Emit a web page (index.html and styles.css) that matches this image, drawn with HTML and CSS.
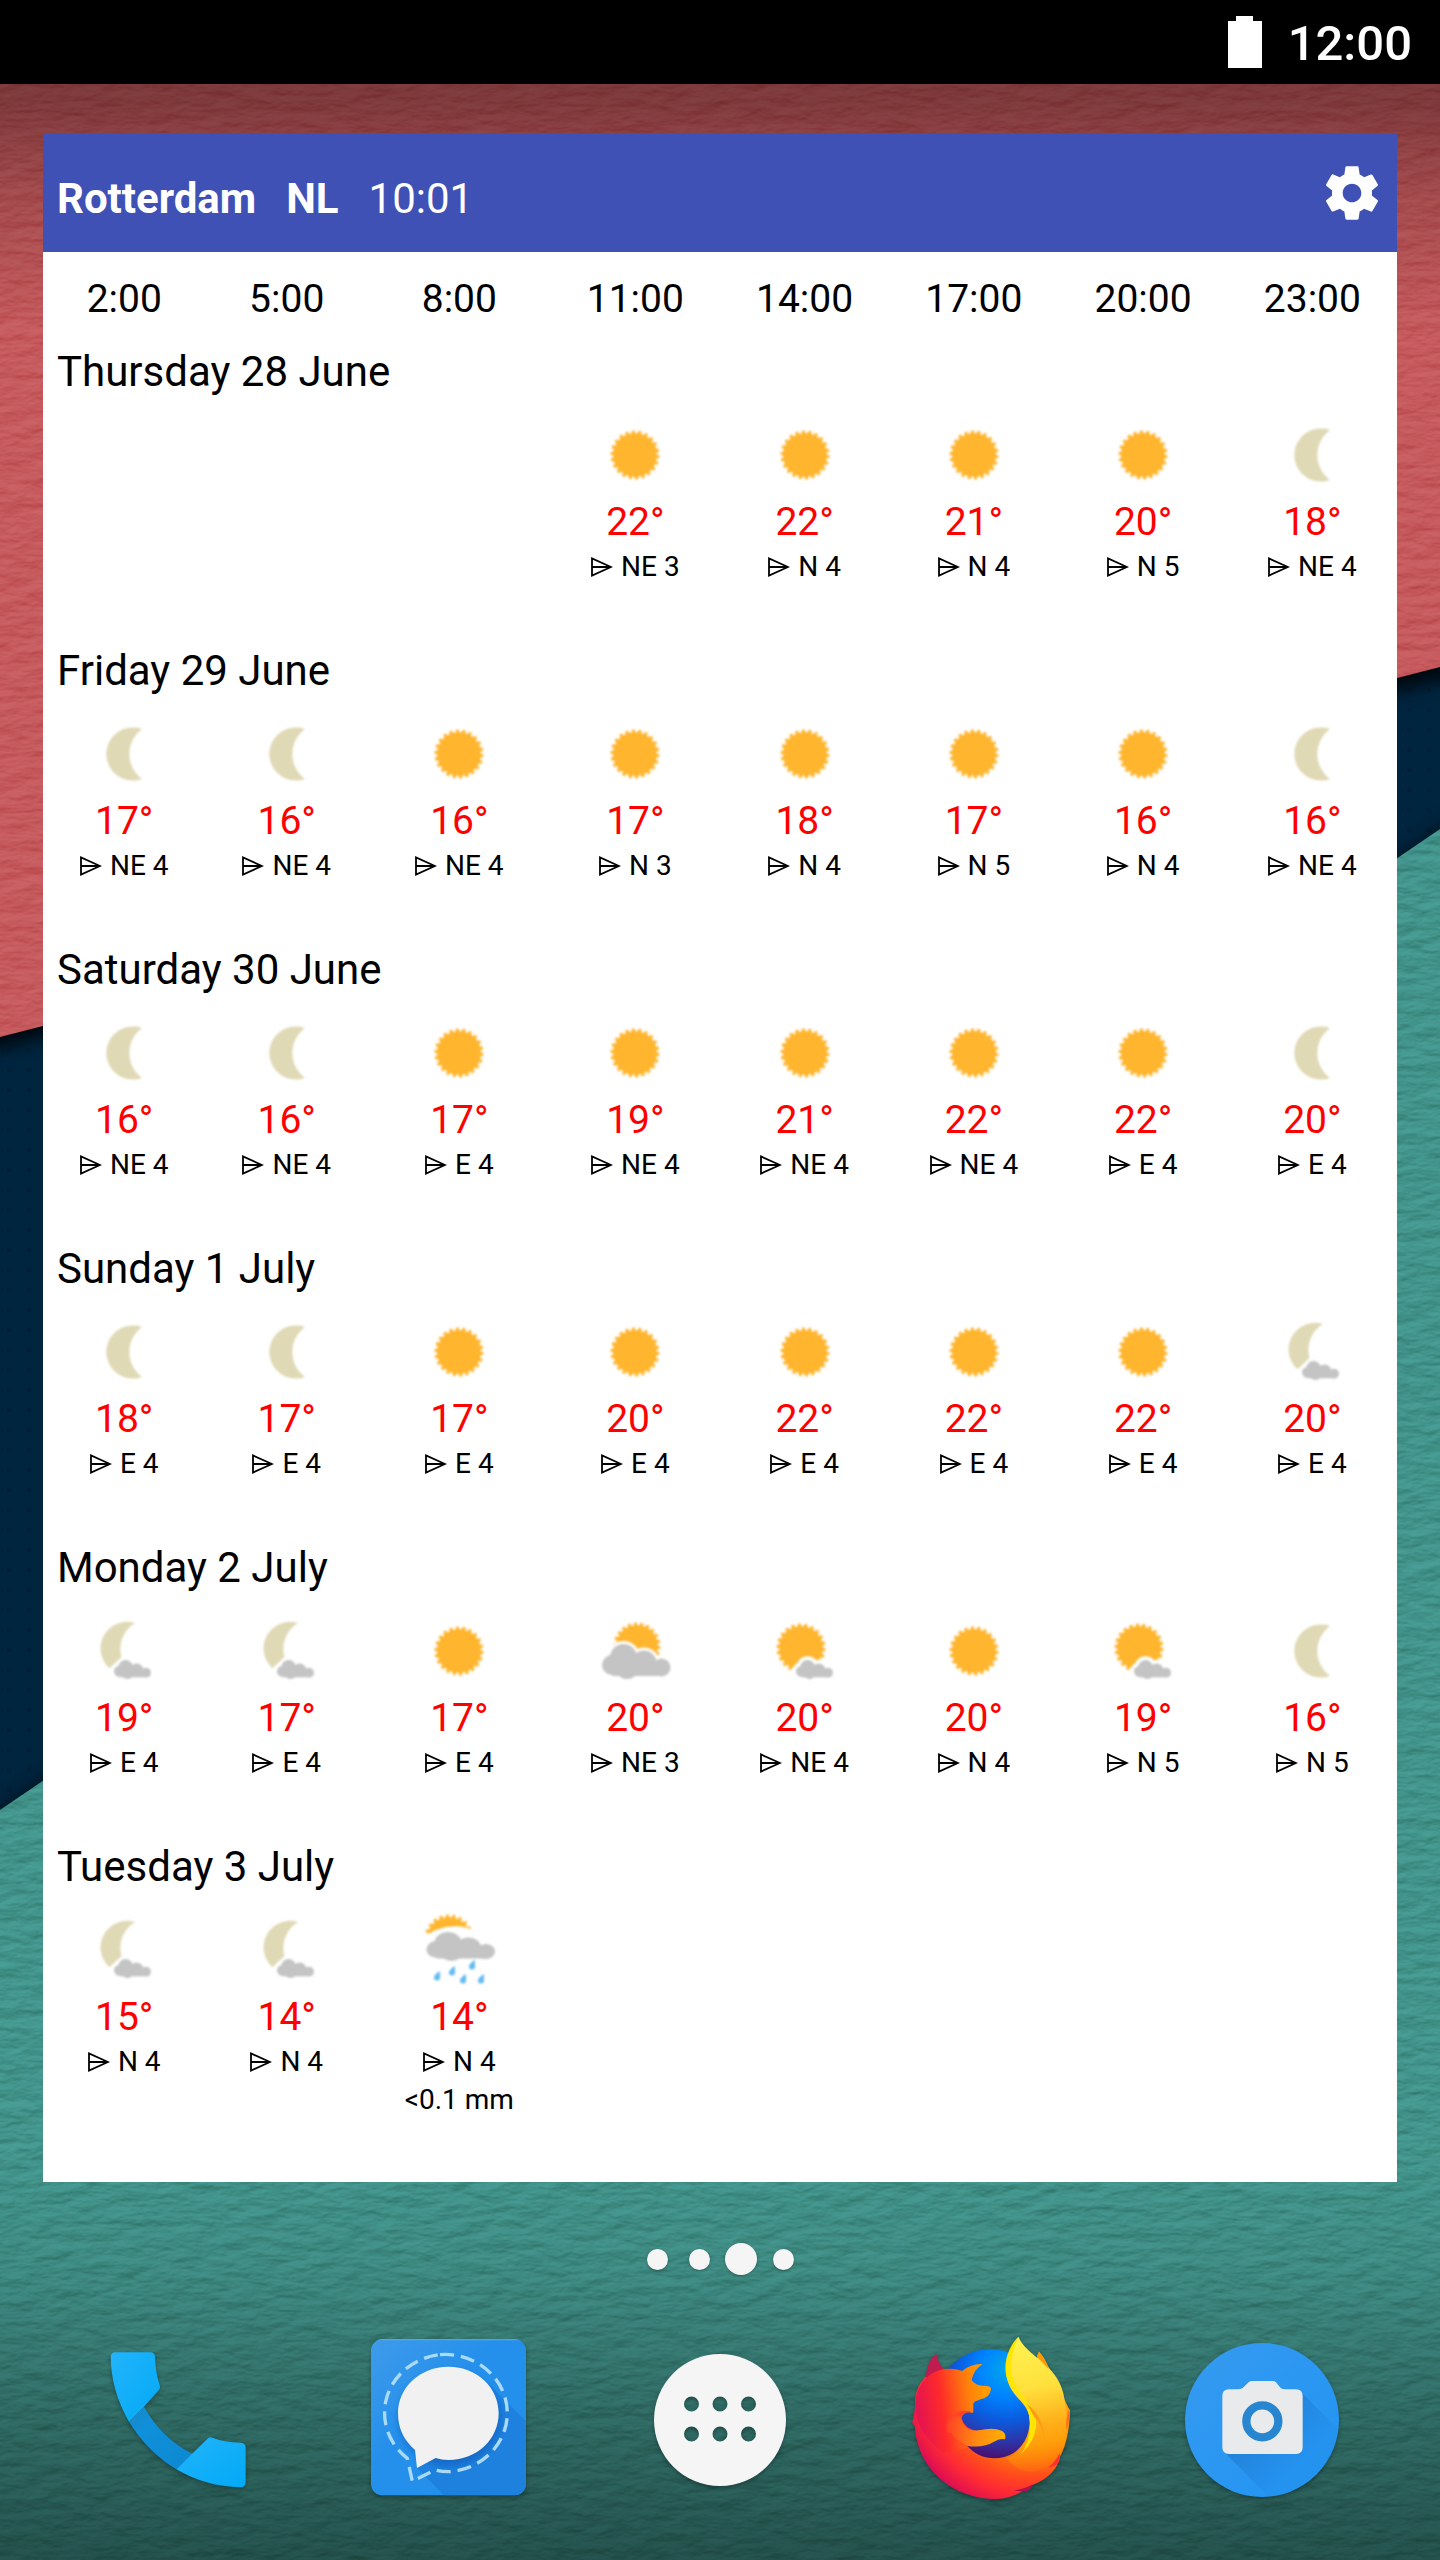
FILE: index.html
```html
<!DOCTYPE html>
<html lang="en">
<head>
<meta charset="utf-8">
<meta name="viewport" content="width=device-width, initial-scale=1">
<title>Weather widget</title>
<link rel="stylesheet" href="styles.css">
</head>
<body>
<svg class="defs" aria-hidden="true">
  <defs>
    <symbol id="sun" viewBox="0 0 80 80">
      <g fill="#ffb52e" stroke="#ffb52e"><circle cx="40" cy="40" r="22" stroke="none"/><circle cx="40" cy="40" r="22" fill="none" stroke-width="5" pathLength="88" stroke-dasharray="2 2"/></g>
    </symbol>
    <symbol id="moon" viewBox="0 0 80 80">
      <path fill="#e0d9b5" d="M58 15A26.600 26.600 0 1 0 58 65A31 31 0 0 1 58 15z"/>
    </symbol>
    <g id="cloud">
      <circle cx="17" cy="54" r="10"/><circle cx="28.500" cy="46.500" r="13.500"/><circle cx="32" cy="56" r="12"/><circle cx="49" cy="52" r="12.500"/><circle cx="66.500" cy="56.500" r="9"/><path d="M17 50H66V65H17z"/>
    </g>
    <symbol id="moon-cloud" viewBox="0 0 80 80">
      <path fill="#e0d9b5" d="M51 12A26.600 26.600 0 0 0 25.500 57.300L37.500 46A30 30 0 0 1 51 12z"/>
      <use href="#cloud" transform="translate(26.200 31.200) scale(.54)" fill="#fff" stroke="#fff" stroke-width="7"/>
      <use href="#cloud" transform="translate(26.200 31.200) scale(.54)" fill="#c4c4c4"/>
    </symbol>
    <symbol id="sun-cloud" viewBox="0 0 80 80">
      <g fill="#ffb52e" stroke="#ffb52e"><circle cx="36" cy="37" r="22" stroke="none"/><circle cx="36" cy="37" r="22" fill="none" stroke-width="5" pathLength="88" stroke-dasharray="2 2"/></g>
      <use href="#cloud" transform="translate(27.200 31.200) scale(.54)" fill="#fff" stroke="#fff" stroke-width="14"/>
      <use href="#cloud" transform="translate(27.200 31.200) scale(.54)" fill="#c4c4c4"/>
    </symbol>
    <symbol id="cloudy" viewBox="0 0 80 80">
      <g fill="#ffb52e" stroke="#ffb52e"><circle cx="42" cy="35" r="21" stroke="none"/><circle cx="42" cy="35" r="21" fill="none" stroke-width="5" pathLength="88" stroke-dasharray="2 2"/></g>
      <use href="#cloud" fill="#fff" stroke="#fff" stroke-width="6"/>
      <use href="#cloud" fill="#c4c4c4"/>
    </symbol>
    <symbol id="rain" viewBox="0 0 80 80">
      <g fill="#ffb52e" stroke="#ffb52e"><circle cx="30" cy="29" r="22" stroke="none"/><circle cx="30" cy="29" r="22" fill="none" stroke-width="5" pathLength="88" stroke-dasharray="2 2"/></g>
      <path fill="#fff" d="M0 30Q28 8 58 21L80 40V80H0z"/>
      <use href="#cloud" transform="translate(.5 -5.400) scale(1 .83)" fill="#c4c4c4"/>
      <g fill="#64bbf4"><path id="drop" d="M21 61Q14 65 15 69Q18 72 21 69z"/><use href="#drop" x="15" y="-5"/><use href="#drop" x="26" y="3"/><use href="#drop" x="35" y="-11"/><use href="#drop" x="44" y="3"/></g>
    </symbol>
    <symbol id="dart" viewBox="0 0 22 20">
      <path fill="none" stroke="#000" stroke-width="1.800" d="M1 1.500V18.500L20 10z M1 10H20"/>
    </symbol>
  </defs>
</svg>

<div class="screen">
  <svg class="wallpaper" viewBox="0 0 1440 2560" preserveAspectRatio="none" aria-hidden="true">
    <defs>
      <linearGradient id="shade" x1="0" y1="0" x2="0" y2="1">
        <stop offset="0" stop-opacity=".42"/><stop offset=".04" stop-opacity=".36"/><stop offset=".08" stop-opacity=".16"/><stop offset=".13" stop-opacity="0"/>
        <stop offset=".84" stop-opacity="0"/><stop offset=".885" stop-opacity=".07"/><stop offset=".94" stop-opacity=".28"/><stop offset="1" stop-opacity=".46"/>
      </linearGradient>
      <pattern id="dots" width="20" height="20" patternUnits="userSpaceOnUse"><rect width="20" height="20" fill="#00253f"/><circle cx="9" cy="10" r="2.500" fill="#001e35"/></pattern>
      <clipPath id="sheets"><path d="M0 0H1440V667L0 1037z M0 1810L1440 829V2560H0z"/></clipPath>
      <filter id="edge" x="-5%" y="-5%" width="110%" height="110%"><feGaussianBlur stdDeviation="9"/></filter>
      <filter id="leather" x="0" y="0" width="100%" height="100%" color-interpolation-filters="sRGB">
        <feTurbulence type="fractalNoise" baseFrequency=".035 .085" numOctaves="4" seed="8"/>
        <feColorMatrix values="0 0 0 0 1  0 0 0 0 1  0 0 0 0 1  1 0 0 0 0"/>
        <feDiffuseLighting surfaceScale="3" diffuseConstant=".69" lighting-color="#fff"><feDistantLight azimuth="250" elevation="48"/></feDiffuseLighting>
      </filter>
    </defs>
    <rect width="1440" height="2560" fill="url(#dots)"/>
    <path d="M-40 0H1480V670L-40 1058z" fill="#000" opacity=".8" filter="url(#edge)"/>
    <path d="M-40 1837L1480 802V2600H-40z" fill="#000" opacity=".6" filter="url(#edge)"/>
    <path d="M0 0H1440V667L0 1037z" fill="#c5595c"/>
    <path d="M0 1810L1440 829V2560H0z" fill="#41938a"/>
    <g class="grain" clip-path="url(#sheets)"><rect width="1440" height="2560" filter="url(#leather)"/></g>
    <rect width="1440" height="2560" fill="url(#shade)"/>
  </svg>

  <header class="status">
    <svg class="battery" viewBox="0 0 34 52" aria-label="Battery full"><path fill="#fff" d="M8 0H25V5H34V52H0V5H8z"/></svg>
    <time class="clock">12:00</time>
  </header>

  <main class="widget">
    <header class="bar">
      <h1 class="place"><span>Rotterdam</span><span>NL</span><time class="updated">10:01</time></h1>
      <button class="settings" type="button" aria-label="Settings">
        <svg viewBox="0 0 24 24"><path fill="#fff" d="M19.430 12.980c.04-.32.07-.64.07-.98s-.03-.66-.07-.98l2.110-1.650c.19-.15.24-.42.12-.64l-2-3.460c-.12-.22-.39-.3-.61-.22l-2.490 1c-.52-.4-1.080-.73-1.690-.98l-.38-2.650C14.460 2.180 14.250 2 14 2h-4c-.25 0-.46.18-.49.42l-.38 2.650c-.61.25-1.170.59-1.690.98l-2.490-1c-.23-.09-.49 0-.61.22l-2 3.460c-.13.22-.07.49.12.64l2.110 1.650c-.04.32-.07.65-.07.98s.03.66.07.98l-2.110 1.650c-.19.15-.24.42-.12.64l2 3.460c.12.22.39.3.61.22l2.490-1c.52.4 1.080.73 1.690.98l.38 2.650c.03.24.24.42.49.42h4c.25 0 .46-.18.49-.42l.38-2.650c.61-.25 1.170-.59 1.690-.98l2.490 1c.23.09.49 0 .61-.22l2-3.460c.12-.22.07-.49-.12-.64l-2.110-1.650zM12 15.500c-1.930 0-3.500-1.570-3.500-3.500s1.570-3.500 3.500-3.500 3.500 1.570 3.500 3.500-1.570 3.500-3.500 3.500z"/></svg>
      </button>
    </header>

    <table class="forecast">
      <colgroup><col class="early" span="2"><col class="morning"><col class="later" span="5"></colgroup>
      <thead>
        <tr><th scope="col">2:00</th><th scope="col">5:00</th><th scope="col">8:00</th><th scope="col">11:00</th><th scope="col">14:00</th><th scope="col">17:00</th><th scope="col">20:00</th><th scope="col">23:00</th></tr>
      </thead>
      <tbody>
        <tr><th class="day" colspan="8" scope="rowgroup">Thursday 28 June</th></tr>
        <tr>
          <td></td><td></td><td></td>
          <td><svg class="sky"><use href="#sun"/></svg><p class="temp">22°</p><p class="wind"><svg class="dart"><use href="#dart"/></svg>NE 3</p></td>
          <td><svg class="sky"><use href="#sun"/></svg><p class="temp">22°</p><p class="wind"><svg class="dart"><use href="#dart"/></svg>N 4</p></td>
          <td><svg class="sky"><use href="#sun"/></svg><p class="temp">21°</p><p class="wind"><svg class="dart"><use href="#dart"/></svg>N 4</p></td>
          <td><svg class="sky"><use href="#sun"/></svg><p class="temp">20°</p><p class="wind"><svg class="dart"><use href="#dart"/></svg>N 5</p></td>
          <td><svg class="sky"><use href="#moon"/></svg><p class="temp">18°</p><p class="wind"><svg class="dart"><use href="#dart"/></svg>NE 4</p></td>
        </tr>
      </tbody>
      <tbody>
        <tr><th class="day" colspan="8" scope="rowgroup">Friday 29 June</th></tr>
        <tr>
          <td><svg class="sky"><use href="#moon"/></svg><p class="temp">17°</p><p class="wind"><svg class="dart"><use href="#dart"/></svg>NE 4</p></td>
          <td><svg class="sky"><use href="#moon"/></svg><p class="temp">16°</p><p class="wind"><svg class="dart"><use href="#dart"/></svg>NE 4</p></td>
          <td><svg class="sky"><use href="#sun"/></svg><p class="temp">16°</p><p class="wind"><svg class="dart"><use href="#dart"/></svg>NE 4</p></td>
          <td><svg class="sky"><use href="#sun"/></svg><p class="temp">17°</p><p class="wind"><svg class="dart"><use href="#dart"/></svg>N 3</p></td>
          <td><svg class="sky"><use href="#sun"/></svg><p class="temp">18°</p><p class="wind"><svg class="dart"><use href="#dart"/></svg>N 4</p></td>
          <td><svg class="sky"><use href="#sun"/></svg><p class="temp">17°</p><p class="wind"><svg class="dart"><use href="#dart"/></svg>N 5</p></td>
          <td><svg class="sky"><use href="#sun"/></svg><p class="temp">16°</p><p class="wind"><svg class="dart"><use href="#dart"/></svg>N 4</p></td>
          <td><svg class="sky"><use href="#moon"/></svg><p class="temp">16°</p><p class="wind"><svg class="dart"><use href="#dart"/></svg>NE 4</p></td>
        </tr>
      </tbody>
      <tbody>
        <tr><th class="day" colspan="8" scope="rowgroup">Saturday 30 June</th></tr>
        <tr>
          <td><svg class="sky"><use href="#moon"/></svg><p class="temp">16°</p><p class="wind"><svg class="dart"><use href="#dart"/></svg>NE 4</p></td>
          <td><svg class="sky"><use href="#moon"/></svg><p class="temp">16°</p><p class="wind"><svg class="dart"><use href="#dart"/></svg>NE 4</p></td>
          <td><svg class="sky"><use href="#sun"/></svg><p class="temp">17°</p><p class="wind"><svg class="dart"><use href="#dart"/></svg>E 4</p></td>
          <td><svg class="sky"><use href="#sun"/></svg><p class="temp">19°</p><p class="wind"><svg class="dart"><use href="#dart"/></svg>NE 4</p></td>
          <td><svg class="sky"><use href="#sun"/></svg><p class="temp">21°</p><p class="wind"><svg class="dart"><use href="#dart"/></svg>NE 4</p></td>
          <td><svg class="sky"><use href="#sun"/></svg><p class="temp">22°</p><p class="wind"><svg class="dart"><use href="#dart"/></svg>NE 4</p></td>
          <td><svg class="sky"><use href="#sun"/></svg><p class="temp">22°</p><p class="wind"><svg class="dart"><use href="#dart"/></svg>E 4</p></td>
          <td><svg class="sky"><use href="#moon"/></svg><p class="temp">20°</p><p class="wind"><svg class="dart"><use href="#dart"/></svg>E 4</p></td>
        </tr>
      </tbody>
      <tbody>
        <tr><th class="day" colspan="8" scope="rowgroup">Sunday 1 July</th></tr>
        <tr>
          <td><svg class="sky"><use href="#moon"/></svg><p class="temp">18°</p><p class="wind"><svg class="dart"><use href="#dart"/></svg>E 4</p></td>
          <td><svg class="sky"><use href="#moon"/></svg><p class="temp">17°</p><p class="wind"><svg class="dart"><use href="#dart"/></svg>E 4</p></td>
          <td><svg class="sky"><use href="#sun"/></svg><p class="temp">17°</p><p class="wind"><svg class="dart"><use href="#dart"/></svg>E 4</p></td>
          <td><svg class="sky"><use href="#sun"/></svg><p class="temp">20°</p><p class="wind"><svg class="dart"><use href="#dart"/></svg>E 4</p></td>
          <td><svg class="sky"><use href="#sun"/></svg><p class="temp">22°</p><p class="wind"><svg class="dart"><use href="#dart"/></svg>E 4</p></td>
          <td><svg class="sky"><use href="#sun"/></svg><p class="temp">22°</p><p class="wind"><svg class="dart"><use href="#dart"/></svg>E 4</p></td>
          <td><svg class="sky"><use href="#sun"/></svg><p class="temp">22°</p><p class="wind"><svg class="dart"><use href="#dart"/></svg>E 4</p></td>
          <td><svg class="sky"><use href="#moon-cloud"/></svg><p class="temp">20°</p><p class="wind"><svg class="dart"><use href="#dart"/></svg>E 4</p></td>
        </tr>
      </tbody>
      <tbody>
        <tr><th class="day" colspan="8" scope="rowgroup">Monday 2 July</th></tr>
        <tr>
          <td><svg class="sky"><use href="#moon-cloud"/></svg><p class="temp">19°</p><p class="wind"><svg class="dart"><use href="#dart"/></svg>E 4</p></td>
          <td><svg class="sky"><use href="#moon-cloud"/></svg><p class="temp">17°</p><p class="wind"><svg class="dart"><use href="#dart"/></svg>E 4</p></td>
          <td><svg class="sky"><use href="#sun"/></svg><p class="temp">17°</p><p class="wind"><svg class="dart"><use href="#dart"/></svg>E 4</p></td>
          <td><svg class="sky"><use href="#cloudy"/></svg><p class="temp">20°</p><p class="wind"><svg class="dart"><use href="#dart"/></svg>NE 3</p></td>
          <td><svg class="sky"><use href="#sun-cloud"/></svg><p class="temp">20°</p><p class="wind"><svg class="dart"><use href="#dart"/></svg>NE 4</p></td>
          <td><svg class="sky"><use href="#sun"/></svg><p class="temp">20°</p><p class="wind"><svg class="dart"><use href="#dart"/></svg>N 4</p></td>
          <td><svg class="sky"><use href="#sun-cloud"/></svg><p class="temp">19°</p><p class="wind"><svg class="dart"><use href="#dart"/></svg>N 5</p></td>
          <td><svg class="sky"><use href="#moon"/></svg><p class="temp">16°</p><p class="wind"><svg class="dart"><use href="#dart"/></svg>N 5</p></td>
        </tr>
      </tbody>
      <tbody>
        <tr><th class="day" colspan="8" scope="rowgroup">Tuesday 3 July</th></tr>
        <tr>
          <td><svg class="sky"><use href="#moon-cloud"/></svg><p class="temp">15°</p><p class="wind"><svg class="dart"><use href="#dart"/></svg>N 4</p></td>
          <td><svg class="sky"><use href="#moon-cloud"/></svg><p class="temp">14°</p><p class="wind"><svg class="dart"><use href="#dart"/></svg>N 4</p></td>
          <td><svg class="sky"><use href="#rain"/></svg><p class="temp">14°</p><p class="wind"><svg class="dart"><use href="#dart"/></svg>N 4</p><p class="wind">&lt;0.1 mm</p></td>
          <td></td><td></td><td></td><td></td><td></td>
        </tr>
      </tbody>
    </table>
  </main>

  <nav class="pager" aria-label="Home screens">
    <button type="button" aria-label="Screen 1"></button>
    <button type="button" aria-label="Screen 2"></button>
    <button type="button" aria-label="Screen 3" aria-current="true"></button>
    <button type="button" aria-label="Screen 4"></button>
  </nav>

  <nav class="dock" aria-label="Favourite apps">
    <a href="#phone" aria-label="Phone">
      <svg viewBox="42 48 504 504">
        <defs>
          <linearGradient id="ph" x1="0" y1="0" x2="1" y2="1"><stop offset="0" stop-color="#22b4fb"/><stop offset="1" stop-color="#03a9f6"/></linearGradient>
          <linearGradient id="hd" x1="0" y1="0" x2="1" y2="1"><stop offset="0" stop-color="#1a87c8"/><stop offset=".3" stop-color="#1090da"/><stop offset="1" stop-color="#0c88d0"/></linearGradient>
        </defs>
        <path fill="url(#hd)" d="M147 305L192 260Q243 353 338 402L289 448Q202 395 147 305z"/>
        <path fill="url(#ph)" d="M107 97H210Q225 97 225 111Q227 164 240 198Q242 205 236 211L192 260L147 305Q94 215 92 112Q92 97 107 97z"/>
        <path fill="url(#ph)" d="M289 448L384 355Q389 350 397 353Q430 366 482 368Q497 369 497 383V487Q497 502 481 502Q377 500 289 448z"/>
      </svg>
    </a>
    <a href="#signal" aria-label="Signal">
      <svg viewBox="858 48 504 504">
        <defs>
          <linearGradient id="sg" x1="0" y1="0" x2="1" y2="1"><stop offset="0" stop-color="#3f9bea"/><stop offset=".4" stop-color="#2590eb"/><stop offset="1" stop-color="#2090ec"/></linearGradient>
          <clipPath id="sgc"><rect x="876" y="58" width="465" height="468" rx="34"/></clipPath>
          <filter id="soft"><feGaussianBlur stdDeviation="9"/></filter>
        </defs>
        <rect x="876" y="58" width="465" height="468" rx="34" fill="url(#sg)"/>
        <g clip-path="url(#sgc)">
          <path d="M1222 185L1360 323V526H1095L1014 444z" fill="#1f7fdc" opacity=".85"/>
          <path d="M876 59H1341" stroke="#6bb2ee" stroke-width="3"/>
          <ellipse cx="1112" cy="296" rx="154" ry="142" fill="#0d55b4" opacity=".5" filter="url(#soft)"/>
        </g>
        <path fill="none" stroke="#a9dbf8" stroke-width="10" stroke-dasharray="42 21" d="M1083 104Q1108 102 1130 106A187 176 0 0 1 1110 455Q1085 455 1068 450L1000 484L985 415A187 176 0 0 1 1083 104z"/>
        <path fill="#f1f1f1" d="M1108 140C1195 140 1259 203 1259 280S1195 420 1108 420Q1088 420 1070 414L1014 444L1008 390C975 362 957 325 957 280C957 203 1022 140 1108 140z"/>
      </svg>
    </a>
    <button type="button" aria-label="All apps">
      <svg viewBox="0 0 168 168"><path fill="#f5f5f5" fill-rule="evenodd" d="M84 18a66 66 0 1 0 0 132a66 66 0 1 0 0-132zM55.500 60.500a7.500 7.500 0 1 1 0 15a7.500 7.500 0 1 1 0-15zM84 60.500a7.500 7.500 0 1 1 0 15a7.500 7.500 0 1 1 0-15zM112.500 60.500a7.500 7.500 0 1 1 0 15a7.500 7.500 0 1 1 0-15zM55.500 90.500a7.500 7.500 0 1 1 0 15a7.500 7.500 0 1 1 0-15zM84 90.500a7.500 7.500 0 1 1 0 15a7.500 7.500 0 1 1 0-15zM112.500 90.500a7.500 7.500 0 1 1 0 15a7.500 7.500 0 1 1 0-15z"/></svg>
    </button>
    <a href="#firefox" aria-label="Firefox">
      <svg viewBox="51 48 504 504">
        <defs>
          <radialGradient id="globe" gradientUnits="userSpaceOnUse" cx="350" cy="150" r="270"><stop offset="0" stop-color="#00a8ea"/><stop offset=".3" stop-color="#0083ff"/><stop offset=".55" stop-color="#0a5de0"/><stop offset=".8" stop-color="#2d35a8"/><stop offset="1" stop-color="#4b0d6c"/></radialGradient>
          <radialGradient id="fox" gradientUnits="userSpaceOnUse" cx="430" cy="180" r="430"><stop offset="0" stop-color="#ffbd2e"/><stop offset=".45" stop-color="#ff9500"/><stop offset=".68" stop-color="#ff4a1d"/><stop offset=".8" stop-color="#ff2a33"/><stop offset=".93" stop-color="#e01050"/><stop offset="1" stop-color="#b5007f"/></radialGradient>
          <linearGradient id="face" gradientUnits="userSpaceOnUse" x1="80" y1="230" x2="280" y2="200"><stop offset="0" stop-color="#e5144f"/><stop offset=".35" stop-color="#ff2a2a"/><stop offset=".75" stop-color="#ff7d0c"/><stop offset="1" stop-color="#ff9a00"/></linearGradient>
          <linearGradient id="flame" gradientUnits="userSpaceOnUse" x1="400" y1="60" x2="480" y2="470"><stop offset="0" stop-color="#fff250"/><stop offset=".35" stop-color="#ffe03c"/><stop offset=".6" stop-color="#ffb21c"/><stop offset="1" stop-color="#ff9000" stop-opacity="0"/></linearGradient>
          <linearGradient id="arm" gradientUnits="userSpaceOnUse" x1="180" y1="330" x2="345" y2="350"><stop offset="0" stop-color="#ff4a22"/><stop offset=".5" stop-color="#ff8a12"/><stop offset="1" stop-color="#ffb000"/></linearGradient>
        </defs>
        <circle cx="300" cy="252" r="164" fill="url(#globe)"/>
        <path fill="#c01c50" d="M106 180Q110 125 138 100Q145 132 162 148L130 190z"/>
        <path fill="url(#fox)" d="M76 255Q74 280 66 312Q70 305 74 318C82 450 190 537 318 537Q370 537 428 495Q500 465 510 410Q538 360 540 270L536 265L470 130Q462 110 447 95L400 245C440 290 420 415 312 415C265 415 238 385 230 376L165 320L150 200L106 170Q70 210 76 255z"/>
        <path fill="url(#face)" d="M76 255C80 195 115 147 178 146Q205 147 216 153Q245 130 278 132Q250 150 245 180Q258 198 280 197Q305 196 303 208Q300 232 272 238Q250 245 250 252V276Q245 282 240 275Q222 272 215 283C150 330 200 370 235 382L160 400Q72 330 76 255z"/>
        <path fill="#ff4327" d="M172 340Q158 290 215 272Q240 272 247 278Q218 275 215 295Q222 325 262 334z"/>
        <path fill="url(#arm)" d="M213 293C222 335 255 335 285 328Q312 323 335 332Q350 340 345 358Q330 355 315 364Q280 385 232 378Q180 350 175 315Q190 280 213 293z"/>
        <path fill="url(#flame)" d="M385 50Q348 100 348 150C352 240 420 235 420 310C418 370 380 405 350 415Q400 480 480 440C535 400 540 310 520 220C500 130 410 110 385 50z"/>
        <path fill="#ffe600" d="M385 50C345 90 325 170 380 222Q420 260 420 310Q420 370 390 405Q450 350 436 285C420 235 370 220 364 150Q362 100 385 50z"/>
        <path fill="#ff9a14" d="M410 250Q460 290 465 360Q455 310 432 290z"/>
        <path fill="#ff9a00" d="M440 108L447 95Q466 115 476 148z"/>
        <path fill="#ff6a22" d="M538 265Q526 295 529 330Q540 300 538 265z"/>
        <path fill="#ff3030" d="M510 398Q500 420 475 442Q500 440 508 424z"/>
        <path fill="#b01050" d="M430 493Q400 508 372 511Q405 520 420 508z"/>
      </svg>
    </a>
    <a href="#camera" aria-label="Camera">
      <svg viewBox="864 48 504 504">
        <defs>
          <clipPath id="cc"><circle cx="1116" cy="300" r="231"/></clipPath>
          <linearGradient id="cs" gradientUnits="userSpaceOnUse" x1="1100" y1="280" x2="1250" y2="430"><stop offset="0" stop-color="#1c72c4"/><stop offset="1" stop-color="#1c80dc" stop-opacity=".15"/></linearGradient>
          <linearGradient id="cb" x1="0" y1="0" x2="1" y2="1"><stop offset="0" stop-color="#369af0"/><stop offset="1" stop-color="#2094f3"/></linearGradient>
        </defs>
        <circle cx="1116" cy="300" r="231" fill="url(#cb)"/>
        <path clip-path="url(#cc)" fill="url(#cs)" opacity=".7" d="M1231 214L1360 343V540H1145L1003 396z"/>
        <path fill="#e9eaec" d="M1017 208H1042Q1051 208 1058 204L1076 187Q1080 183 1086 183H1148Q1154 183 1158 187L1172 204Q1178 208 1186 208H1218Q1238 208 1238 228V382Q1238 402 1218 402H1017Q997 402 997 382V228Q997 208 1017 208z"/>
        <circle cx="1117" cy="304" r="48" fill="none" stroke="#2886d0" stroke-width="25"/>
      </svg>
    </a>
  </nav>
</div>
</body>
</html>
```
FILE: styles.css
```css
* {
  box-sizing: border-box;
}

body {
  margin: 0;
  font-family: Roboto, "Liberation Sans", sans-serif;
  color: #000;
}

p,
h1 {
  margin: 0;
}

button {
  padding: 0;
  border: 0;
  background: none;
}

.defs {
  position: absolute;
  width: 0;
  height: 0;
}

.screen {
  position: relative;
  display: flex;
  flex-direction: column;
  min-height: 100vh;
  isolation: isolate;
}

.wallpaper {
  position: absolute;
  inset: 0;
  z-index: -1;
  width: 100%;
  height: 100%;
}

.grain {
  mix-blend-mode: overlay;
  opacity: 0.3;
}

.status {
  display: flex;
  justify-content: flex-end;
  align-items: center;
  gap: 26px;
  height: 84px;
  padding-right: 28px;
  background: #000;
  color: #fff;
}

.battery {
  width: 34px;
  height: 52px;
}

.clock {
  padding-top: 4px;
  font-size: 49px;
  font-weight: 500;
  line-height: 60px;
}

.widget {
  margin: 49px 43px 0;
  padding-bottom: 41px;
  background: #fff;
}

.bar {
  display: flex;
  justify-content: space-between;
  align-items: center;
  height: 119px;
  padding: 0 13px 0 14px;
  background: #3f51b5;
  color: #fff;
}

.place {
  display: flex;
  gap: 30px;
  padding-top: 12px;
  font-size: 42px;
  font-weight: 700;
  line-height: 50px;
}

.updated {
  font-weight: 400;
}

.settings,
.settings svg {
  display: block;
  width: 64px;
  height: 64px;
}

.forecast {
  width: 100%;
  table-layout: fixed;
  border-collapse: collapse;
}

.early {
  width: 12%;
}

.morning {
  width: 13.5%;
}

.later {
  width: 12.5%;
}

.forecast th {
  padding: 24px 0 25px;
  font-size: 39px;
  font-weight: 400;
  line-height: 46px;
  text-align: center;
}

.forecast .day {
  padding: 0 14px;
  font-size: 42px;
  line-height: 50px;
  text-align: left;
}

.forecast td {
  height: 249px;
  padding: 18px 0;
  vertical-align: top;
  text-align: center;
}

.sky {
  display: block;
  width: 80px;
  height: 80px;
  margin: 0 auto 4px;
  filter: blur(1px);
}

.temp {
  margin-bottom: 5px;
  font-size: 39px;
  line-height: 46px;
  color: #f00;
}

.wind {
  display: flex;
  justify-content: center;
  align-items: center;
  gap: 8px;
  margin-bottom: 4px;
  font-size: 28px;
  line-height: 34px;
}

.dart {
  width: 22px;
  height: 20px;
}

.pager {
  display: flex;
  justify-content: center;
  margin: 61px 0;
}

.pager button {
  display: grid;
  place-items: center;
  width: 42px;
  height: 32px;
}

.pager button::before {
  content: "";
  width: 21px;
  height: 21px;
  border-radius: 50%;
  background: #f5f5f5;
  box-shadow: 0 1px 3px rgba(0, 0, 0, 0.3);
}

.pager [aria-current]::before {
  width: 32px;
  height: 32px;
}

.dock {
  display: grid;
  grid-template-columns: repeat(5, 1fr);
  justify-items: center;
  padding: 0 43px 56px;
}

.dock svg {
  display: block;
  width: 168px;
  height: 168px;
  filter: drop-shadow(0 2px 2px rgba(0, 0, 0, 0.3));
}
```
